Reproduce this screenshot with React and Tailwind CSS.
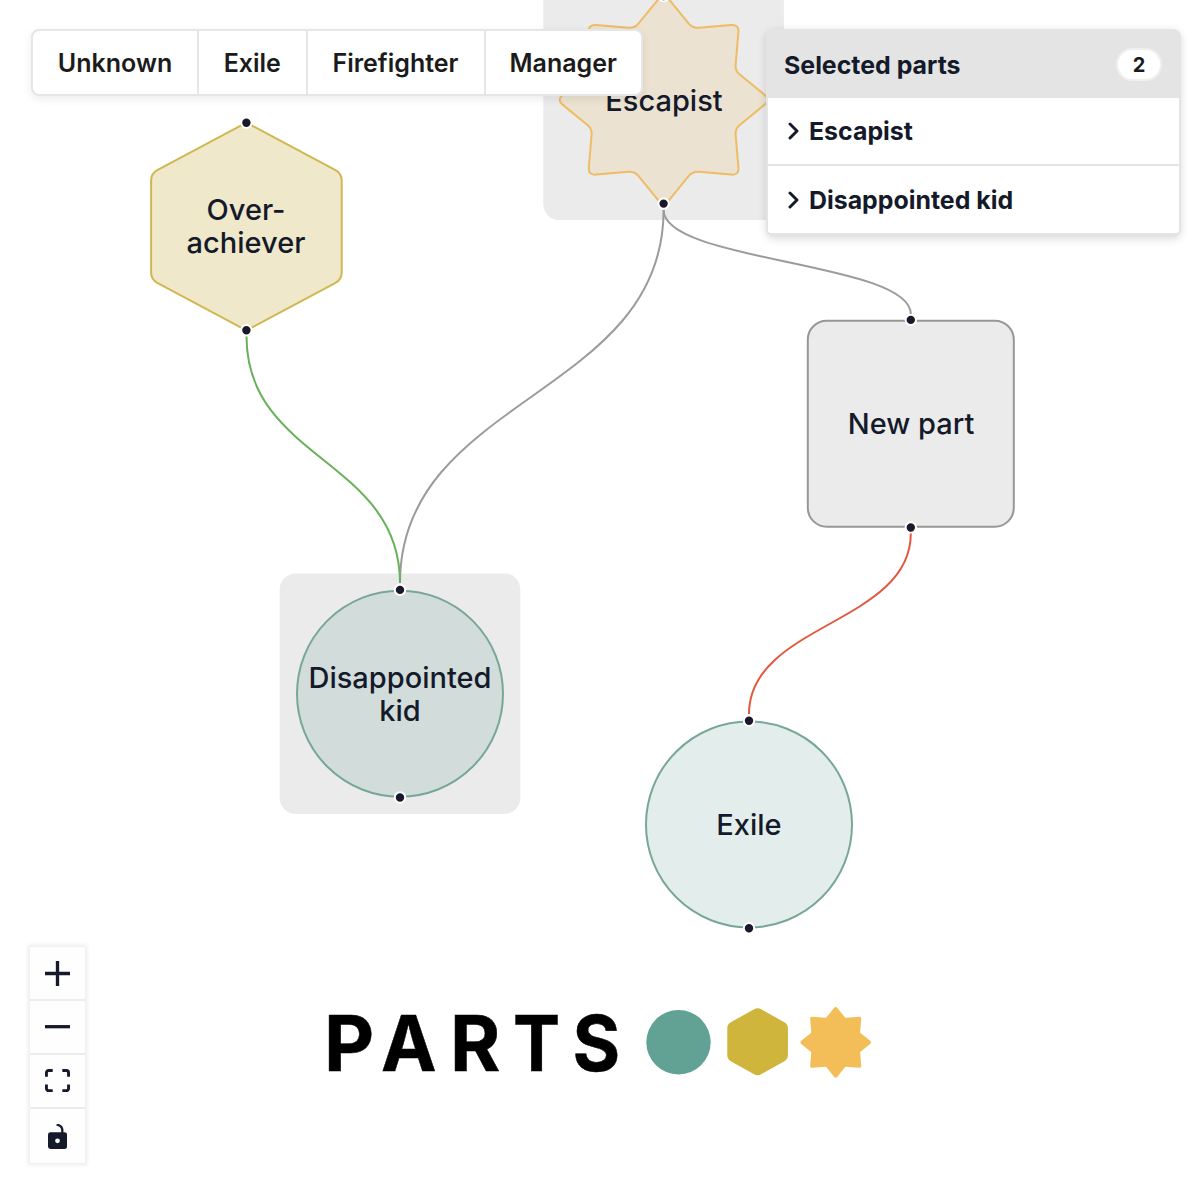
import React from "react";

function roundedPath(points, radius) {
  const n = points.length;
  let d = "";
  points.forEach(([x, y, r = radius], i) => {
    const [px, py] = points[(i + n - 1) % n];
    const [nx, ny] = points[(i + 1) % n];
    const a = Math.hypot(px - x, py - y);
    const b = Math.hypot(nx - x, ny - y);
    d += `${i ? "L" : "M"}${x + ((px - x) * r) / a} ${y + ((py - y) * r) / a}`;
    d += `Q${x} ${y} ${x + ((nx - x) * r) / b} ${y + ((ny - y) * r) / b}`;
  });
  return d + "Z";
}

const STAR = roundedPath(
  [
    [0, -107, 8], [29, -71.5], [75.5, -75.5, 8], [71.5, -29],
    [107, 0, 8], [71.5, 29], [75.5, 75.5, 8], [29, 71.5],
    [0, 107, 8], [-29, 71.5], [-75.5, 75.5, 8], [-71.5, 29],
    [-107, 0, 8], [-71.5, -29], [-75.5, -75.5, 8], [-29, -71.5],
  ],
  6
);

const HEXAGON = roundedPath(
  [[0, -104], [95.3, -53], [95.3, 53], [0, 104], [-95.3, 53], [-95.3, -53]],
  7
);

const LOGO_HEXAGON = roundedPath(
  [[0, -34.5], [30.3, -17.5], [30.3, 17.5], [0, 34.5], [-30.3, 17.5], [-30.3, -17.5]],
  4
);

const LOGO_STAR = roundedPath(
  [
    [0, -36.5], [9.7, -24.4, 0.5], [25.7, -25.6, 2], [24.4, -9.7, 0.5],
    [36.5, 0], [24.4, 9.7, 0.5], [25.7, 25.6, 2], [9.7, 24.4, 0.5],
    [0, 36.5], [-9.7, 24.4, 0.5], [-25.7, 25.6, 2], [-24.4, 9.7, 0.5],
    [-36.5, 0], [-24.4, -9.7, 0.5], [-25.7, -25.6, 2], [-9.7, -24.4, 0.5],
  ],
  3
);

const SHAPES = {
  circle: <circle r="103" fill="#62a294" fillOpacity="0.18" stroke="#78a798" strokeWidth="2" />,
  square: <rect x="-103" y="-103" width="206" height="206" rx="19" fill="#ebebeb" stroke="#979797" strokeWidth="2" />,
  hexagon: <path d={HEXAGON} fill="#f0e8cb" stroke="#cfb852" strokeWidth="2" />,
  star: <path d={STAR} fill="#ebe2d1" stroke="#edbc64" strokeWidth="2" />,
};

const NODES = [
  { label: "Escapist", shape: "star", x: 663.6, y: 99.8, selected: true },
  { label: "Over-\nachiever", shape: "hexagon", x: 246.4, y: 226.5 },
  { label: "New part", shape: "square", x: 910.8, y: 423.7 },
  { label: "Disappointed\nkid", shape: "circle", x: 400, y: 693.7, selected: true },
  { label: "Exile", shape: "circle", x: 749, y: 824.5 },
];

const EDGES = [
  { from: [663.6, 210], to: [400, 583], color: "#9b9b9b" },
  { from: [663.6, 210], to: [910.8, 314], color: "#9b9b9b" },
  { from: [246.5, 336.5], to: [400, 583], color: "#69b05c" },
  { from: [910.8, 533.5], to: [749, 714], color: "#e2583f" },
];

function PartNode({ label, selected, x, y }) {
  return (
    <div
      className="absolute flex size-[240px] items-center justify-center"
      style={{ left: Math.round(x) - 120, top: Math.round(y) - 120 }}
    >
      <span
        className={`relative text-center text-[29px] leading-[33px] font-medium whitespace-pre text-[#141a2a] ${
          selected ? "top-0" : "-top-px"
        }`}
      >
        {label}
      </span>
    </div>
  );
}

function Canvas() {
  return (
    <div className="absolute inset-0 overflow-hidden">
      <svg className="absolute inset-0" width="1200" height="1200">
        {NODES.map(({ label, shape, x, y, selected }) => (
          <g key={label} transform={`translate(${x} ${y})`}>
            {selected && <rect x="-120.3" y="-120.3" width="240.6" height="240.6" rx="16" fill="#ebebeb" />}
            {SHAPES[shape]}
            <g fill="#1a192b" stroke="#fff" strokeWidth="2">
              <circle cy="-103.8" r="5.2" />
              <circle cy="103.8" r="5.2" />
            </g>
          </g>
        ))}
        <g fill="none" strokeWidth="2">
          {EDGES.map(({ from: [x1, y1], to: [x2, y2], color }, i) => (
            <path
              key={i}
              d={`M${x1} ${y1}C${x1} ${(y1 + y2) / 2} ${x2} ${(y1 + y2) / 2} ${x2} ${y2}`}
              stroke={color}
            />
          ))}
        </g>
      </svg>
      {NODES.map((n) => (
        <PartNode key={n.label} {...n} />
      ))}
    </div>
  );
}

function Toolbar() {
  const base =
    "flex items-center justify-center border-r-2 border-[#e6e6e6] pt-[2px] text-[25px] font-semibold text-[#1b1b1b] last:border-r-0";
  return (
    <div className="ml-px flex h-[67px] w-[612px] rounded-[8px] border-2 border-[#e6e6e6] bg-white shadow-[0_3px_8px_rgba(0,0,0,0.08)]">
      <button className={`${base} w-[166px]`}>Unknown</button>
      <button className={`${base} w-[108.5px]`}>Exile</button>
      <button className={`${base} w-[178px]`}>Firefighter</button>
      <button className={`${base} flex-1`}>Manager</button>
    </div>
  );
}

function SelectedRow({ name }) {
  return (
    <div className="flex h-[66.5px] items-center bg-white pt-px pl-[20px] text-[24.9px] font-bold text-[#141a2a]">
      <svg
        className="mr-[9px]"
        width="12"
        height="18"
        viewBox="0 0 12 18"
        fill="none"
        stroke="currentColor"
        strokeWidth="2.9"
        strokeLinecap="round"
        strokeLinejoin="round"
      >
        <path d="M2 2l7 7-7 7" />
      </svg>
      <span className="pt-px">{name}</span>
    </div>
  );
}

function SelectedPanel() {
  return (
    <div className="w-[415px] rounded-[8px] bg-[#e4e4e4] px-[2px] pb-[4px] shadow-[0_2px_8px_rgba(0,0,0,0.14)]">
      <div className="flex h-[68.5px] items-center justify-between pr-[17px] pl-4 text-[24.9px] font-bold text-[#141a2a]">
        <span className="pt-[4px]">Selected parts</span>
        <span className="mt-[2px] flex h-[33px] w-[46px] items-center justify-center rounded-full border-2 border-[#f0f0f0] bg-white pt-px text-[20px] text-[#1b1b1b]">
          2
        </span>
      </div>
      <div className="flex flex-col gap-[2px] overflow-hidden rounded-b-[3px]">
        <SelectedRow name="Escapist" />
        <SelectedRow name="Disappointed kid" />
      </div>
    </div>
  );
}

function Controls() {
  const cell =
    "flex h-[54px] items-center justify-center border-b-2 border-[#ebebeb] last:border-b-0";
  return (
    <div className="flex w-[55px] flex-col bg-[#fefefe] text-[#141a2a] shadow-[0_0_4px_2px_rgba(0,0,0,0.08)]">
      <button className={cell}>
        <svg width="25" height="25" viewBox="0 0 32 32" fill="currentColor">
          <path d="M32 18.133H18.133V32h-4.266V18.133H0v-4.266h13.867V0h4.266v13.867H32z" />
        </svg>
      </button>
      <button className={cell}>
        <svg width="25" height="4" viewBox="0 0 32 5" fill="currentColor">
          <path d="M0 0h32v4.2H0z" />
        </svg>
      </button>
      <button className={cell}>
        <svg width="25" height="23.5" viewBox="0 0 32 30" fill="currentColor">
          <path d="M3.692 4.63c0-.53.4-.938.939-.938h5.215V0H4.708C2.13 0 0 2.054 0 4.63v5.216h3.692V4.631zM27.354 0h-5.2v3.692h5.17c.53 0 .984.4.984.939v5.215H32V4.631A4.624 4.624 0 0027.354 0zm.954 24.83c0 .532-.4.94-.939.94h-5.215v3.768h5.215c2.577 0 4.631-2.13 4.631-4.707v-5.139h-3.692v5.139zm-23.677.94c-.531 0-.939-.4-.939-.94v-5.138H0v5.139c0 2.577 2.13 4.707 4.708 4.707h5.138V25.77H4.631z" />
        </svg>
      </button>
      <button className={cell}>
        <svg width="19.5" height="25" viewBox="0 0 25 32" fill="currentColor">
          <path d="M21.333 10.667H19.81V7.619C19.81 3.429 16.38 0 12.19 0c-4.114 1.828-1.37 2.133.305 2.438 1.676.305 4.42 2.59 4.42 5.181v3.048H3.047A3.056 3.056 0 000 13.714v15.238A3.056 3.056 0 003.048 32h18.285a3.056 3.056 0 003.048-3.048V13.714a3.056 3.056 0 00-3.048-3.047zM12.19 24.533a3.056 3.056 0 01-3.047-3.047 3.056 3.056 0 013.047-3.048 3.056 3.056 0 013.048 3.048 3.056 3.056 0 01-3.048 3.047z" />
        </svg>
      </button>
    </div>
  );
}

const LETTERS = [
  ["P", 349, 1],
  ["A", 408.7, 0.96],
  ["R", 475.3, 0.99],
  ["T", 536.5, 0.91],
  ["S", 596.3, 0.94],
];

function Logo() {
  return (
    <svg width="560" height="110" viewBox="320 990 560 110">
      <g
        fontSize="77.5"
        textAnchor="middle"
        className="fill-black stroke-black font-bold"
        strokeWidth="0.5"
      >
        {LETTERS.map(([letter, x, stretch]) => (
          <text key={letter} transform={`translate(${x} 1071.2) scale(${stretch} 1)`}>
            {letter}
          </text>
        ))}
      </g>
      <circle cx="678.5" cy="1042.2" r="32.2" fill="#62a294" />
      <path d={LOGO_HEXAGON} transform="translate(757.6 1041.7)" fill="#cfb53c" />
      <path d={LOGO_STAR} transform="translate(835.7 1042.3)" fill="#f3bd57" />
    </svg>
  );
}

export default function App() {
  return (
    <div className="relative h-[1200px] w-[1200px] overflow-hidden bg-white font-['Inter',sans-serif]">
      <Canvas />
      <div className="relative flex h-full flex-col justify-between pt-[29px] pr-[19px] pb-[37px] pl-[30px]">
        <div className="flex items-start justify-between">
          <Toolbar />
          <SelectedPanel />
        </div>
        <div className="flex h-[216px] items-start">
          <Controls />
          <div className="mt-[43px] ml-[235px]">
            <Logo />
          </div>
        </div>
      </div>
    </div>
  );
}
